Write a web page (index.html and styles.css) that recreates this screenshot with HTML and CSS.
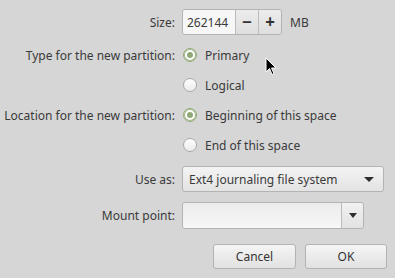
FILE: index.html
```html
<!DOCTYPE html>
<html lang="en">
<head>
  <meta charset="UTF-8" />
  <title>Create new partition</title>
  <link rel="stylesheet" href="styles.css">
</head>
<body>
  <div class="dialog">
    <div class="row size-row">
      <span class="label">Size:</span>
      <div class="spin">
        <input class="spin-entry" type="text" value="262144" />
        <button class="spin-btn" type="button">&minus;</button>
        <button class="spin-btn" type="button">+</button>
      </div>
      <span class="unit">MB</span>
    </div>

    <div class="row radio-row">
      <span class="label">Type for the new partition:</span>
      <label class="radio checked"><span class="dot"></span>Primary</label>
    </div>
    <div class="row radio-row">
      <span class="label"></span>
      <label class="radio"><span class="dot"></span>Logical</label>
    </div>

    <div class="row radio-row">
      <span class="label">Location for the new partition:</span>
      <label class="radio checked"><span class="dot"></span>Beginning of this space</label>
    </div>
    <div class="row radio-row">
      <span class="label"></span>
      <label class="radio"><span class="dot"></span>End of this space</label>
    </div>

    <div class="row combo-row">
      <span class="label">Use as:</span>
      <div class="combo">
        <span class="combo-text">Ext4 journaling file system</span>
        <span class="arrow"></span>
      </div>
    </div>

    <div class="row mount-row">
      <span class="label">Mount point:</span>
      <div class="entry-combo">
        <input class="entry" type="text" value="" />
        <span class="entry-btn"><span class="arrow"></span></span>
      </div>
    </div>

    <div class="actions">
      <button class="btn cancel" type="button">Cancel</button>
      <button class="btn ok" type="button">OK</button>
    </div>
  </div>

  <svg class="cursor" width="13" height="20" viewBox="0 0 13 20">
    <path d="M1 1 L1 15 L4.5 11.5 L7 17.5 L9 16.5 L6.5 11 L11 11 Z" fill="#000" stroke="#fff" stroke-width="1" stroke-linejoin="miter"/>
  </svg>
</body>
</html>
```

FILE: styles.css
```css
body { margin: 0; background: #d6d6d6; font-family: "Noto Sans", sans-serif; font-size: 12px; color: #3a3a3a; }
.dialog { padding-top: 9px; width: 395px; height: 278px; box-sizing: border-box; }
.row { display: flex; align-items: center; }
.label { width: 175px; text-align: right; margin-right: 7px; flex: none; white-space: nowrap; }
.size-row { height: 26px; margin-bottom: 5px; }
.radio-row { height: 30px; }
.combo-row { height: 26px; margin-top: 6px; }
.mount-row { height: 27px; margin-top: 10px; }

.spin { display: flex; height: 26px; width: 100px; border: 1px solid #b3b3b3; border-radius: 3px; box-sizing: border-box; overflow: hidden; }
.spin-entry { width: 52px; box-sizing: border-box; border: none; background: #f7f7f7; font: inherit; color: inherit; padding: 0 0 0 4px; outline: none; }
.spin-btn { width: 24px; border: none; border-left: 1px solid #bcbcbc; background: linear-gradient(#ececec, #dedede); font: bold 17px "Noto Sans", sans-serif; color: #333; padding: 0; line-height: 22px; }
.unit { margin-left: 8px; }

.radio { display: flex; align-items: center; }
.dot { width: 12px; height: 12px; border: 1px solid #a9a9a9; border-radius: 50%; background: linear-gradient(#fdfdfd, #ececec); margin: 0 8px 0 1px; position: relative; }
.radio.checked .dot { border-color: #8fa876; background: #ffffff; box-shadow: inset 0 0 0 1px #9db683; }
.radio.checked .dot::after { content: ""; position: absolute; left: 3px; top: 3px; width: 6px; height: 6px; border-radius: 50%; background: #8fa876; }

.combo { display: flex; align-items: center; justify-content: space-between; width: 202px; height: 26px; box-sizing: border-box; border: 1px solid #b3b3b3; border-radius: 3px; background: linear-gradient(#f4f4f4, #e3e3e3); padding: 0 9px 0 6px; }
.arrow { width: 0; height: 0; border-left: 5px solid transparent; border-right: 5px solid transparent; border-top: 5px solid #2e2e2e; }

.entry-combo { display: flex; width: 182px; height: 27px; box-sizing: border-box; border: 1px solid #b3b3b3; border-radius: 3px; overflow: hidden; }
.entry { flex: 1; border: none; background: linear-gradient(#ececec, #f7f7f7); outline: none; font: inherit; min-width: 0; }
.entry-btn { width: 21px; display: flex; align-items: center; justify-content: center; border-left: 1px solid #bcbcbc; background: linear-gradient(#f1f1f1, #e2e2e2); }
.entry-btn .arrow { border-left-width: 4px; border-right-width: 4px; border-top-width: 5px; }

.actions { display: flex; gap: 9px; margin: 15px 0 0 213px; }
.btn { height: 25px; box-sizing: border-box; border: 1px solid #b3b3b3; border-radius: 3px; background: linear-gradient(#f5f5f5, #e1e1e1); font: inherit; color: #333; padding: 0; }
.cancel { width: 83px; }
.ok { width: 82px; }

.cursor { position: absolute; left: 265px; top: 57px; }
```
